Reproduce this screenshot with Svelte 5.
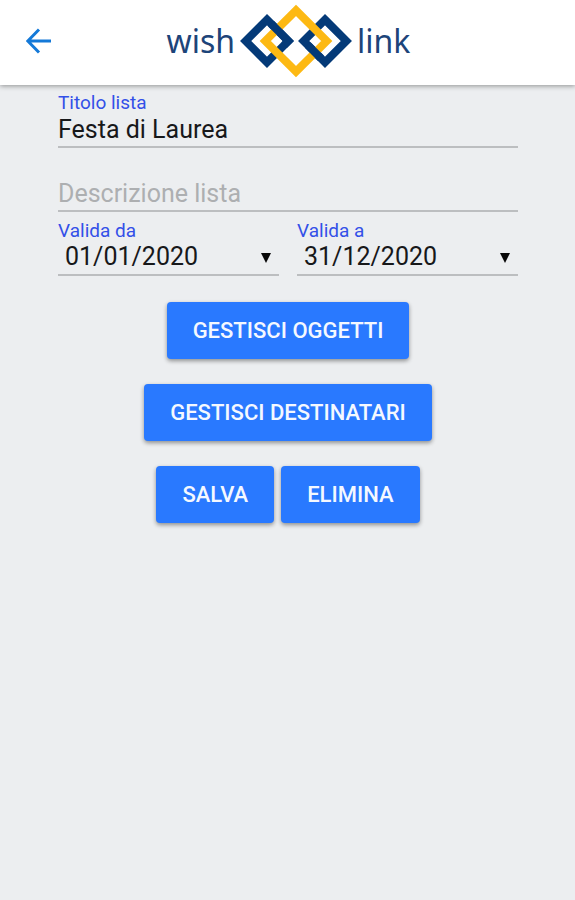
<script lang="ts">
	let title = $state("Festa di Laurea");
	let description = $state("");
	let validFrom = $state("01/01/2020");
	let validTo = $state("31/12/2020");
</script>

<header class="toolbar">
	<button class="back" aria-label="Indietro">
		<svg viewBox="0 0 26 26" width="26" height="26">
			<path d="M25 13H2M13 1.5L1.8 13L13 24.5" />
		</svg>
	</button>

	<div class="brand">
		<span>wish</span>
		<svg class="logo" viewBox="0 0 114 76" width="114" height="76">
			<path class="blue" d="M28 16.7L49.3 38L28 59.3L6.7 38Z" />
			<path class="blue" d="M86 16.7L107.3 38L86 59.3L64.7 38Z" />
			<path class="gold" d="M57 7.3L87.7 38L57 68.7L26.3 38Z" />
			<!-- strands that pass over the gold link -->
			<path class="blue" d="M32 20.7L49.3 38L45.3 42" />
			<path class="blue" d="M68.7 42L82 55.3" />
		</svg>
		<span>link</span>
	</div>
</header>

<main>
	<div class="field">
		<label for="title">Titolo lista</label>
		<input id="title" type="text" bind:value={title} />
	</div>

	<div class="field description">
		<input
			type="text"
			aria-label="Descrizione lista"
			placeholder="Descrizione lista"
			bind:value={description}
		/>
	</div>

	<div class="dates">
		<div class="field">
			<label for="from">Valida da</label>
			<select id="from" bind:value={validFrom}>
				<option>01/01/2020</option>
			</select>
		</div>
		<div class="field">
			<label for="to">Valida a</label>
			<select id="to" bind:value={validTo}>
				<option>31/12/2020</option>
			</select>
		</div>
	</div>

	<div class="actions">
		<div class="row"><button>Gestisci oggetti</button></div>
		<div class="row"><button>Gestisci destinatari</button></div>
		<div class="row">
			<button>Salva</button>
			<button>Elimina</button>
		</div>
	</div>
</main>

<style>
	:global(body) {
		background: #eceef0;
		font-family: Roboto, sans-serif;
	}

	.toolbar {
		display: grid;
		grid-template-columns: 78px 1fr 76px;
		align-items: center;
		height: 85px;
		background: #fff;
		box-shadow: 0 1px 5px rgba(0, 0, 0, 0.4);
	}

	.back {
		display: flex;
		justify-content: center;
		padding: 0 0 4px;
		border: 0;
		background: none;
		cursor: pointer;
	}

	.back path {
		fill: none;
		stroke: #1479d8;
		stroke-width: 3;
	}

	.brand {
		display: flex;
		align-items: center;
		justify-content: center;
		gap: 4px;
		padding-bottom: 4px;
		color: #1d4479;
		font-family: "Noto Sans", sans-serif;
		font-size: 32px;
		line-height: 40px;
	}

	.logo path {
		fill: none;
		stroke-width: 8;
	}

	.logo .blue {
		stroke: #043a78;
	}

	.logo .gold {
		stroke: #fdb913;
	}

	main {
		padding: 8px 57px 24px 58px;
	}

	.field {
		display: flex;
		flex-direction: column;
	}

	label {
		color: #3350e8;
		font-size: 19px;
		line-height: 20px;
	}

	input,
	select {
		box-sizing: border-box;
		width: 100%;
		height: 35px;
		padding: 0;
		border: 0;
		border-bottom: 2px solid #bcbec0;
		border-radius: 0;
		outline: 0;
		background: none;
		color: #17181a;
		font: 25px/30px Roboto, sans-serif;
	}

	input::placeholder {
		color: #adafb1;
		opacity: 1;
	}

	.description {
		padding-top: 29px;
	}

	.dates {
		display: grid;
		grid-template-columns: 1fr 1fr;
		gap: 18px;
		padding-top: 9px;
	}

	select {
		appearance: none;
		padding: 0 0 2px 7px;
		background: url("data:image/svg+xml,%3Csvg xmlns='http://www.w3.org/2000/svg' width='10' height='10'%3E%3Cpath d='M0 0h10L5 10z' fill='%23080808'/%3E%3C/svg%3E")
			no-repeat right 8px top 12px;
	}

	.actions {
		display: flex;
		flex-direction: column;
		gap: 25px;
		padding-top: 26px;
	}

	.row {
		display: flex;
		flex-wrap: wrap;
		justify-content: center;
		gap: 7px;
	}

	.row button {
		height: 57px;
		padding: 0 26px;
		border: 0;
		border-radius: 4px;
		background: #2979ff;
		box-shadow: 0 2px 4px rgba(0, 0, 0, 0.4);
		color: #f4f8ff;
		font: 500 22px/28px Roboto, sans-serif;
		text-transform: uppercase;
		cursor: pointer;
	}
</style>
